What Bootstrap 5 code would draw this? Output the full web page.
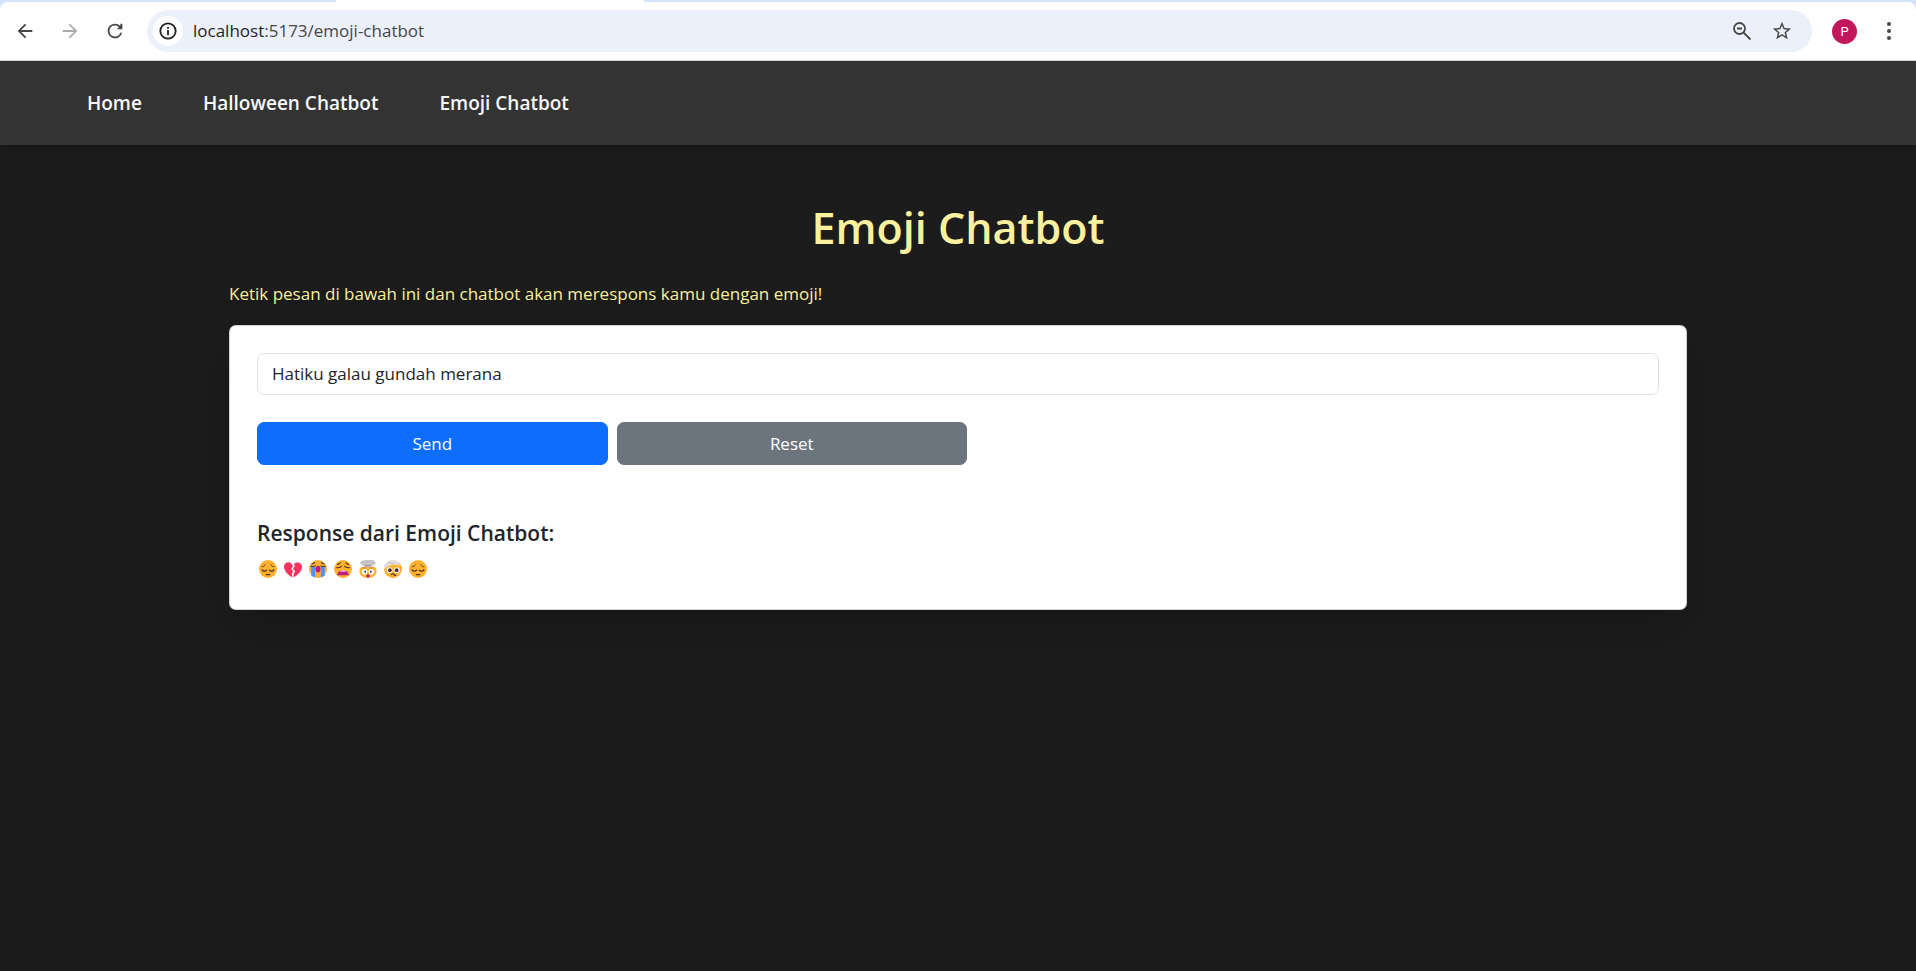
<!DOCTYPE html>
<html lang="id">
<head>
<meta charset="utf-8">
<meta name="viewport" content="width=device-width, initial-scale=1">
<title>Emoji Chatbot</title>
<link rel="stylesheet" href="https://cdn.jsdelivr.net/npm/bootstrap@5.3.0/dist/css/bootstrap.min.css">
<style>
  body { min-height: 100vh; font-family: "Open Sans", "Noto Sans", sans-serif; font-size: 17px; line-height: 26px; background: #1c1c1c; color: #212529; }
  svg { display: block; fill: currentColor; }

  /* browser toolbar */
  .browser-top { background: #d3e3fd; }
  .tab-edge { height: 2px; padding-left: 336px; }
  .tab-active { width: 308px; max-width: 100%; height: 2px; background: #fff; }
  .toolbar { height: 59px; padding: 0 16px 0 14px; background: #fff; border-bottom: 1px solid #d9d9d9; border-radius: 8px 8px 0 0; color: #474747; }
  .tool-btn { border: 0; padding: 0; background: none; color: inherit; }
  .tool-btn:disabled { color: #aaa; }
  .history { gap: 23px; }
  .omnibox { height: 42px; margin-left: 21px; padding: 0 19px 0 6px; border-radius: 21px; background: #ebf0fa; }
  .omnibox-tools { gap: 18px; }
  .site-info { width: 30px; height: 30px; border-radius: 50%; background: #fff; color: #202124; }
  .url { margin-left: 10px; font-size: 17px; color: #474747; }
  .url b { font-weight: 400; color: #1f1f1f; }
  .avatar { width: 25px; height: 25px; margin: 0 21px 0 20px; border-radius: 50%; background: #c2185b; color: #fff; font: 13px/25px Roboto, sans-serif; }

  /* site navigation */
  .site-nav { height: 84px; padding: 0 87px; background: #333; box-shadow: 0 4px 8px rgba(0,0,0,.2); }
  .site-nav ul { gap: 61px; }
  .site-nav .nav-link { padding: 0; font-size: 19px; font-weight: 600; color: #f8f9fa; }

  /* chatbot */
  .chat-main { max-width: 1458px; padding: 55px 0 80px; }
  .chat-title { margin: 0 0 25px; font-size: 43px; line-height: 56px; font-weight: 600; color: #f9f19d; }
  .chat-lead { margin: 0 0 18px; color: #f9f19d; }
  .chat-card { border-radius: 7px; padding: 27px; box-shadow: 0 18px 53px rgba(0,0,0,.18); }
  .chat-card .form-control { height: 42px; padding: 0 14px 2px; font-size: 17px; border-radius: 7px; }
  .chat-actions { gap: 9px; margin: 27px 0 54px; }
  .chat-actions .btn { height: 43px; padding: 0; font-size: 17px; border-radius: 7px; }
  .reply-title { margin: 0 0 8px; font-size: 21px; line-height: 28px; font-weight: 600; }
  .reply { gap: 7px; padding: 5px 2px 4px; }
</style>
</head>
<body>
<svg width="0" height="0" class="position-absolute" aria-hidden="true">
  <defs>
    <symbol id="pensive" viewBox="0 0 32 32">
      <circle cx="16" cy="16" r="16" fill="#ffb02e"/>
      <g fill="none" stroke="#49352b" stroke-width="2.2" stroke-linecap="round"><path d="M5.500 17.500c2 3 6 3 8 .5M18.500 18c2 2.500 6 2.500 8-.5M13 26h6"/><path d="M5.500 12c2.500 0 4.500-1 5.500-3.500M26.500 12c-2.500 0-4.500-1-5.500-3.500" stroke-width="1.500"/></g>
    </symbol>
    <symbol id="broken" viewBox="0 0 32 32">
      <path fill="#f8315f" d="M15 31C8 27 0 20 0 12 0 5 8 2 13 6l3 5-3 5 3 4-2 5z"/>
      <path fill="#f8315f" d="M17 31c7-4 15-11 15-19 0-7-9-10-14-5l1 4-3 5 4 4-3 5z"/>
    </symbol>
    <symbol id="sob" viewBox="0 0 32 32">
      <circle cx="16" cy="16" r="16" fill="#ffb02e"/>
      <path fill="#5092ff" d="M4 11h7v20l-7-3zM21 11h7v17l-7 3z"/>
      <ellipse cx="16" cy="16" rx="4.500" ry="6" fill="#bb1d80"/>
      <path d="M3 11c3 1 6 1 8-.5M29 11c-3 1-6 1-8-.5M5 7c3 0 4-1 5-3M27 7c-3 0-4-1-5-3" fill="none" stroke="#49352b" stroke-width="1.800" stroke-linecap="round"/>
    </symbol>
    <symbol id="weary" viewBox="0 0 32 32">
      <circle cx="16" cy="16" r="16" fill="#ffb02e"/>
      <path fill="#bb1d80" d="M6 27c0-12 20-12 20 0z"/><path fill="#fff" d="M11 19.500c3-1.500 7-1.500 10 0v1H11z"/>
      <path d="M5 13.500c3 .5 6 0 8-2M27 13.500c-3 .5-6 0-8-2M6 8c2-.5 4-1.500 5-3M26 8c-2-.5-4-1.500-5-3" fill="none" stroke="#49352b" stroke-width="2" stroke-linecap="round"/>
    </symbol>
    <symbol id="exploding" viewBox="0 0 32 32">
      <path fill="#ffb02e" d="M2 14l5-1h18l5 1c4 9-2 18-14 18S-2 23 2 14z"/>
      <path fill="#ff822d" d="M3 14l7-3h12l7 3-7 1-6-2-6 2z"/>
      <path fill="#c4c4c4" d="M3 7C1 3 6 0 9 1c3-2 9-2 12-1 5-1 10 3 8 7-2 3-5 2-7 3l1 3H9l1-3c-3 0-5-1-7-3z"/>
      <path fill="#9b9b9b" d="M9 8c4 1.500 10 1.500 14 0l-3 3h-8z"/>
      <circle cx="10" cy="21" r="5" fill="#fff"/><circle cx="22" cy="21" r="5" fill="#fff"/>
      <circle cx="11" cy="21" r="1.800" fill="#402a32"/><circle cx="21" cy="21" r="1.800" fill="#402a32"/>
      <ellipse cx="16" cy="28.500" rx="3" ry="3" fill="#bb1d80"/>
    </symbol>
    <symbol id="bandage" viewBox="0 0 32 32">
      <circle cx="16" cy="16" r="16" fill="#ffb02e"/>
      <path fill="#e6e6e6" d="M0 14C1 0 19-5 28 6l-1 4C18 6 9 8 1 16z"/>
      <path d="M2 11C10 4 18 2 27 7M7 4c5 1 8 2 10 3" fill="none" stroke="#bebebe" stroke-width="1.200"/>
      <circle cx="10" cy="18" r="5" fill="#fff"/><circle cx="23" cy="18" r="5" fill="#fff"/>
      <circle cx="10.500" cy="18" r="3.300" fill="#402a32"/><circle cx="22.500" cy="18" r="3.300" fill="#402a32"/>
      <path d="M13 26c2-2 4-2 5 0s2 2 3 1" fill="none" stroke="#402a32" stroke-width="2" stroke-linecap="round"/>
    </symbol>
  </defs>
</svg>

<header class="browser-top">
  <div class="tab-edge"><div class="tab-active"></div></div>
  <div class="toolbar d-flex align-items-center">
    <div class="history d-flex">
      <button class="tool-btn" type="button" aria-label="Back"><svg width="22" height="22" viewBox="0 0 24 24"><path d="M20 11H7.830l5.590-5.590L12 4l-8 8 8 8 1.410-1.410L7.830 13H20z"/></svg></button>
      <button class="tool-btn" type="button" aria-label="Forward" disabled><svg width="22" height="22" viewBox="0 0 24 24"><path d="M4 11h12.170l-5.590-5.590L12 4l8 8-8 8-1.410-1.410L16.170 13H4z"/></svg></button>
      <button class="tool-btn" type="button" aria-label="Reload"><svg width="22" height="22" viewBox="0 0 24 24"><path d="M17.650 6.350A7.960 7.960 0 0 0 12 4a8 8 0 1 0 7.730 10h-2.080A6 6 0 1 1 12 6c1.660 0 3.140.690 4.220 1.780L14 10h6V4h-2z"/></svg></button>
    </div>
    <div class="omnibox d-flex align-items-center flex-grow-1">
      <button class="tool-btn site-info d-flex align-items-center justify-content-center" type="button" aria-label="Site information"><svg width="20" height="20" viewBox="0 0 20 20"><circle cx="10" cy="10" r="7.700" fill="none" stroke="currentColor" stroke-width="1.800"/><path d="M9.100 9h1.800v5H9.100zM9.100 6h1.800v1.800H9.100z"/></svg></button>
      <span class="url text-nowrap"><b>localhost</b>:5173/emoji-chatbot</span>
      <div class="omnibox-tools d-flex ms-auto">
        <button class="tool-btn" type="button" aria-label="Zoom"><svg width="22" height="22" viewBox="0 0 22 22" fill="none" stroke="currentColor" stroke-width="1.800"><circle cx="8.500" cy="8.500" r="5.500" fill="none"/><path d="M12.500 12.500l7 7M6 8.500h5"/></svg></button>
        <button class="tool-btn" type="button" aria-label="Bookmark"><svg width="22" height="22" viewBox="0 0 24 24"><path d="M22 9.240l-7.190-.620L12 2 9.190 8.630 2 9.240l5.460 4.730L5.820 21 12 17.270 18.180 21l-1.630-7.030zM12 15.400l-3.760 2.270 1-4.280-3.320-2.880 4.380-.380L12 6.100l1.710 4.040 4.380.380-3.320 2.880 1 4.280z"/></svg></button>
      </div>
    </div>
    <button class="tool-btn avatar" type="button" aria-label="Profile">P</button>
    <button class="tool-btn" type="button" aria-label="Menu"><svg width="22" height="22" viewBox="0 0 22 22"><circle cx="11" cy="4" r="2"/><circle cx="11" cy="11" r="2"/><circle cx="11" cy="18" r="2"/></svg></button>
  </div>
</header>

<nav class="site-nav d-flex align-items-center">
  <ul class="nav">
    <li class="nav-item"><a class="nav-link" href="#">Home</a></li>
    <li class="nav-item"><a class="nav-link" href="#">Halloween Chatbot</a></li>
    <li class="nav-item"><a class="nav-link" href="#">Emoji Chatbot</a></li>
  </ul>
</nav>

<main class="chat-main mx-auto">
  <h1 class="chat-title text-center">Emoji Chatbot</h1>
  <label class="chat-lead d-block" for="message">Ketik pesan di bawah ini dan chatbot akan merespons kamu dengan emoji!</label>
  <div class="card chat-card">
    <form>
      <input class="form-control" id="message" type="text" value="Hatiku galau gundah merana">
      <div class="chat-actions d-flex">
        <button class="btn btn-primary w-25" type="button">Send</button>
        <button class="btn btn-secondary w-25" type="button">Reset</button>
      </div>
    </form>
    <h2 class="reply-title">Response dari Emoji Chatbot:</h2>
    <div class="reply d-flex">
      <svg width="18" height="18" role="img" aria-label="😔"><use href="#pensive"/></svg>
      <svg width="18" height="18" role="img" aria-label="💔"><use href="#broken"/></svg>
      <svg width="18" height="18" role="img" aria-label="😭"><use href="#sob"/></svg>
      <svg width="18" height="18" role="img" aria-label="😩"><use href="#weary"/></svg>
      <svg width="18" height="18" role="img" aria-label="🤯"><use href="#exploding"/></svg>
      <svg width="18" height="18" role="img" aria-label="🤕"><use href="#bandage"/></svg>
      <svg width="18" height="18" role="img" aria-label="😔"><use href="#pensive"/></svg>
    </div>
  </div>
</main>
<script src="https://cdn.jsdelivr.net/npm/bootstrap@5.3.0/dist/js/bootstrap.bundle.min.js"></script>
</body>
</html>
